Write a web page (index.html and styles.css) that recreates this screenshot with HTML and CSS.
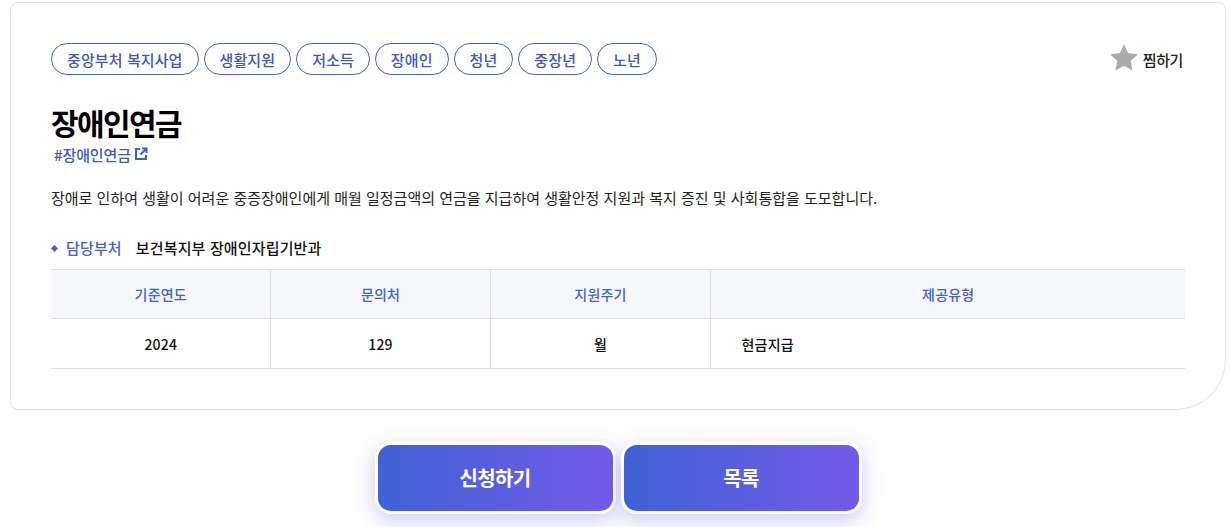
FILE: index.html
```html
<!DOCTYPE html>
<html lang="ko">
<head>
    <meta charset="UTF-8">
    <title>장애인연금</title>
    <link rel="stylesheet" href="styles.css">
</head>
<body>

<div class="card">
    <div class="card-top">
        <div class="tags">
            <span class="tag">중앙부처 복지사업</span>
            <span class="tag">생활지원</span>
            <span class="tag">저소득</span>
            <span class="tag">장애인</span>
            <span class="tag">청년</span>
            <span class="tag">중장년</span>
            <span class="tag">노년</span>
        </div>
        <div class="bookmark">
            <svg class="star" width="28" height="28" viewBox="0 0 28 28"><path d="M14 1.5l3.7 8.2 8.8 1-6.6 6 1.9 8.8-7.8-4.5-7.8 4.5 1.9-8.8-6.6-6 8.8-1z" fill="#aaa" stroke="#aaa" stroke-width="1.2" stroke-linejoin="round"/></svg>
            <span class="bookmark-text">찜하기</span>
        </div>
    </div>

    <h1 class="title">장애인연금</h1>
    <a class="hash" href="#">#장애인연금
        <svg width="14" height="14" viewBox="0 0 14 14" fill="none" stroke="#3f5fd0" stroke-width="2"><path d="M6 2H2v10h10V8"/><path d="M8 1.5h4.5V6"/><path d="M12 2L6.5 7.5"/></svg>
    </a>

    <p class="desc">장애로 인하여 생활이 어려운 중증장애인에게 매월 일정금액의 연금을 지급하여 생활안정 지원과 복지 증진 및 사회통합을 도모합니다.</p>

    <div class="dept">
        <span class="dept-label">담당부처</span>
        <span>보건복지부 장애인자립기반과</span>
    </div>

    <table class="info">
        <thead>
            <tr>
                <th class="col">기준연도</th>
                <th class="col">문의처</th>
                <th class="col">지원주기</th>
                <th>제공유형</th>
            </tr>
        </thead>
        <tbody>
            <tr>
                <td>2024</td>
                <td>129</td>
                <td>월</td>
                <td class="left">현금지급</td>
            </tr>
        </tbody>
    </table>
</div>

<div class="actions">
    <a class="btn" href="#">신청하기</a>
    <a class="btn" href="#">목록</a>
</div>

</body>
</html>
```

FILE: styles.css
```css
* {
    box-sizing: border-box;
}
html, body {
    overflow: hidden;
}
body {
    margin: 0;
    min-height: 527px;
    padding: 2px 4px 0 10px;
    background-color: #fff;
    color: #111;
    font-family: "Noto Sans CJK KR", "Noto Sans", sans-serif;
    font-size: 15px;
}
.card {
    height: 408px;
    padding: 40px 40px 0 40px;
    background-color: #fff;
    border: 1px solid #e1e1e1;
    border-radius: 8px 8px 50px 8px;
}
.card-top {
    display: flex;
    justify-content: space-between;
    align-items: center;
    height: 32px;
}
.tags {
    display: flex;
    gap: 5px;
}
.tag {
    display: flex;
    align-items: center;
    height: 32px;
    padding: 0 15px;
    border: 1px solid #4463c9;
    border-radius: 16px;
    color: #4058b8;
    font-size: 15px;
    font-weight: 500;
    letter-spacing: 0.1px;
}
.bookmark {
    display: flex;
    align-items: center;
    gap: 5px;
    margin-right: 2px;
    font-size: 15px;
    font-weight: 500;
    letter-spacing: -0.4px;
    color: #222;
}
.star {
    margin-top: -3px;
}
.bookmark-text {
    margin-top: 1px;
}
.title {
    margin: 25px 0 0;
    font-size: 30px;
    font-weight: 700;
    line-height: 44px;
    letter-spacing: -1.6px;
    color: #000;
}
.hash {
    display: flex;
    align-items: center;
    gap: 3px;
    height: 22px;
    margin: -1px 0 0 3px;
    color: #4058b8;
    font-size: 15px;
    font-weight: 500;
    letter-spacing: -0.1px;
    text-decoration: none;
}
.desc {
    margin: 22px 0 0;
    font-size: 15px;
    line-height: 22px;
    color: #222;
}
.dept {
    display: flex;
    align-items: center;
    gap: 14px;
    height: 22px;
    margin-top: 27px;
    font-size: 15px;
    font-weight: 500;
    letter-spacing: 0.15px;
}
.dept-label {
    position: relative;
    padding-left: 15px;
    color: #4463c9;
}
.dept-label::before {
    content: "";
    position: absolute;
    left: 1px;
    top: 9px;
    width: 5px;
    height: 5px;
    background-color: #4463c9;
    transform: rotate(45deg);
}
.info {
    width: 1134px;
    margin-top: 11px;
    border-collapse: collapse;
    table-layout: fixed;
    border-top: 1px solid #e1e1e1;
}
.info th, .info td {
    height: 50px;
    padding: 0 0 0 1px;
    border-bottom: 1px solid #dedede;
    border-right: 1px solid #dedede;
    text-align: center;
    font-size: 14px;
    font-weight: 500;
    letter-spacing: 0.2px;
}
.info th:last-child, .info td:last-child {
    border-right: none;
}
.info th {
    height: 49px;
    background-color: #f6f7fb;
    color: #4463c9;
}
.info .col {
    width: 220px;
}
.info th:first-child {
    width: 219px;
}
.info .left {
    padding-left: 31px;
    text-align: left;
}
.actions {
    display: flex;
    justify-content: center;
    gap: 5px;
    margin-top: 32px;
}
.btn {
    display: flex;
    align-items: center;
    justify-content: center;
    width: 241px;
    height: 72px;
    padding-bottom: 2px;
    border: 3px solid #fff;
    border-radius: 16px;
    background: linear-gradient(90deg, #3f62d6, #745ae8);
    box-shadow: 0 6px 20px rgba(80, 80, 210, 0.3);
    color: #fff;
    font-size: 20px;
    font-weight: 700;
    letter-spacing: -0.7px;
    text-decoration: none;
}
```
